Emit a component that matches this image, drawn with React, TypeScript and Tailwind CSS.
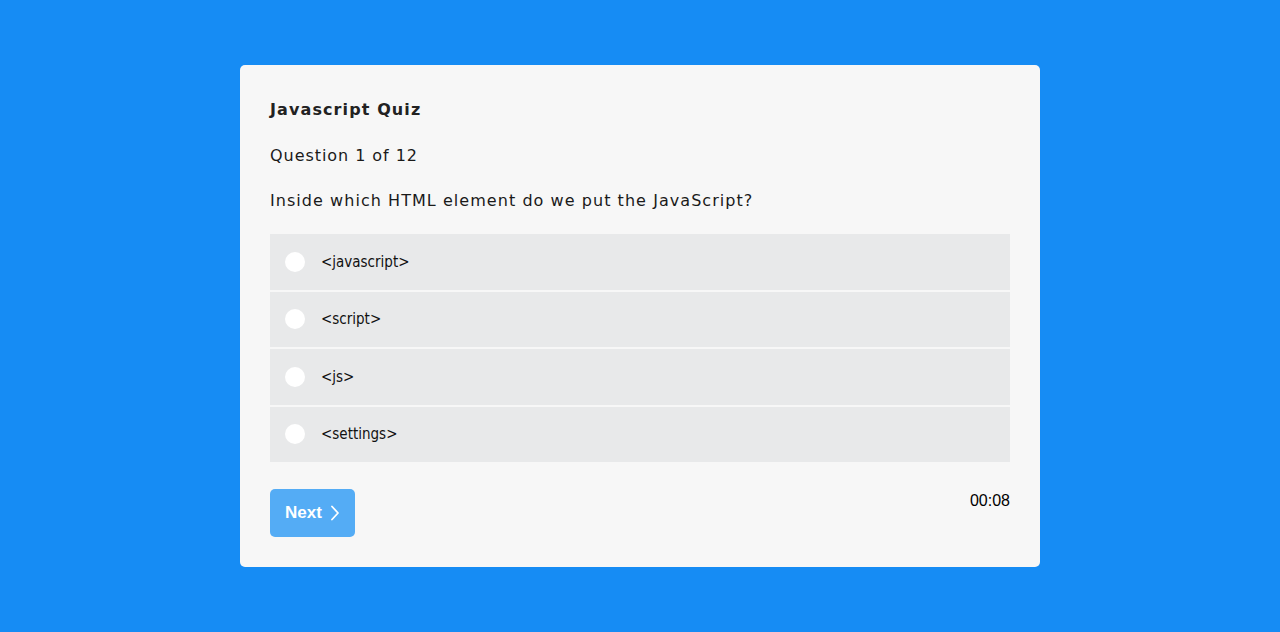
import React, { useState } from 'react';

const options = ['<javascript>', '<script>', '<js>', '<settings>'];

export default function App() {
  const [selected, setSelected] = useState<number | null>(null);

  return (
    <div className="min-h-[632px] w-full bg-[#168cf4] flex justify-center pt-[65px]">
      <div className="w-[800px] h-[502px] bg-[#f7f7f7] rounded-[5px] p-[30px] flex flex-col">
        <h1 className="mt-[3px] h-6 leading-6 text-[16px] font-bold text-[#222] tracking-[1.1px] font-['DejaVu_Sans',sans-serif]">
          Javascript Quiz
        </h1>
        <p className="mt-[22px] h-6 leading-6 text-[16px] text-[#1a1a1a] tracking-[0.95px] font-['DejaVu_Sans',sans-serif]">
          Question 1 of 12
        </p>
        <p className="mt-[21px] h-6 leading-6 text-[16px] text-[#1a1a1a] tracking-[1.05px] font-['DejaVu_Sans',sans-serif]">
          Inside which HTML element do we put the JavaScript?
        </p>

        {/* Options */}
        <div className="mt-[21px] flex flex-col gap-[2px]">
          {options.map((opt, i) => (
            <label
              key={opt}
              onClick={() => setSelected(i)}
              className="h-[55.5px] bg-[#e8e9ea] flex items-center px-[15px] cursor-pointer"
            >
              <span
                className={`w-5 h-5 rounded-full ${selected === i ? 'bg-[#54acf5]' : 'bg-white'}`}
              />
              <span className="ml-4 text-[15px] text-[#111] font-['DejaVu_Sans_Condensed','DejaVu_Sans',sans-serif]">
                {opt}
              </span>
            </label>
          ))}
        </div>

        {/* Footer */}
        <div className="mt-[27px] flex items-start justify-between">
          <button className="w-[85px] h-12 rounded-[5px] bg-[#54acf5] text-white flex items-center justify-center gap-[8px] font-['Liberation_Sans',sans-serif] font-bold text-[17px]">
            Next
            <svg width="10" height="16" viewBox="0 0 10 16" fill="none">
              <path d="M2 1.5 L8 8 L2 14.5" stroke="white" strokeWidth="1.8" strokeLinecap="round" strokeLinejoin="round" />
            </svg>
          </button>
          <span className="leading-6 text-[16px] text-black font-['Liberation_Sans',sans-serif]">00:08</span>
        </div>
      </div>
    </div>
  );
}
